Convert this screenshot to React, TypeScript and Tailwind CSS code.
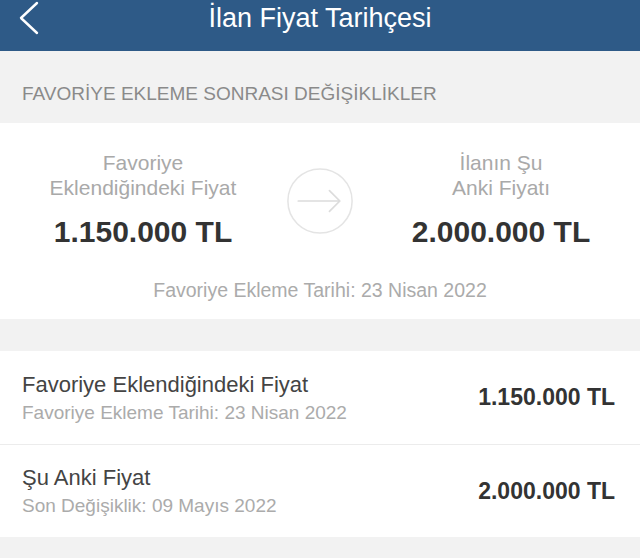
type PriceRow = {
  title: string;
  subtitle: string;
  price: string;
};

const rows: PriceRow[] = [
  {
    title: "Favoriye Eklendiğindeki Fiyat",
    subtitle: "Favoriye Ekleme Tarihi: 23 Nisan 2022",
    price: "1.150.000 TL",
  },
  {
    title: "Şu Anki Fiyat",
    subtitle: "Son Değişiklik: 09 Mayıs 2022",
    price: "2.000.000 TL",
  },
];

function ArrowCircle() {
  return (
    <svg width="72" height="72" viewBox="0 0 72 72" fill="none">
      <circle cx="36" cy="36" r="34" stroke="#e4e4e4" strokeWidth="1.6" />
      <path d="M13 36h44M46 25l11 11-11 11" stroke="#dcdcdc" strokeWidth="1.8" strokeLinecap="round" strokeLinejoin="round" />
    </svg>
  );
}

function BackChevron() {
  return (
    <svg width="22" height="34" viewBox="0 0 22 34" fill="none">
      <path d="M19 2 3 17l16 15" stroke="white" strokeWidth="2.4" strokeLinecap="round" strokeLinejoin="round" />
    </svg>
  );
}

export default function App() {
  return (
    <div className="min-h-[558px] w-[640px] bg-[#f2f2f2] font-['Liberation_Sans',Arial,sans-serif]">
      <header className="relative flex h-[51px] items-center justify-center bg-[#2e5a87]">
        <div className="absolute left-[18px] top-[1px]">
          <BackChevron />
        </div>
        <h1 className="-mt-[14px] text-[27px] text-white">İlan Fiyat Tarihçesi</h1>
      </header>

      <div className="flex h-[72px] items-center px-[22px] pt-[14px]">
        <p className="text-[19px] text-[#8a8a8a]">FAVORİYE EKLEME SONRASI DEĞİŞİKLİKLER</p>
      </div>

      <section className="bg-white pb-[18px] pt-[27px]">
        <div className="grid grid-cols-[286px_68px_1fr] items-start">
          <div className="flex flex-col items-center">
            <p className="text-center text-[21px] leading-[25px] text-[#a9a9a9]">
              Favoriye
              <br />
              Eklendiğindeki Fiyat
            </p>
            <p className="mt-[15px] text-[30px] font-bold leading-[34px] text-[#333]">1.150.000 TL</p>
          </div>
          <div className="flex justify-center pt-[15px]">
            <ArrowCircle />
          </div>
          <div className="flex flex-col items-center pl-[8px]">
            <p className="text-center text-[21px] leading-[25px] text-[#a9a9a9]">
              İlanın Şu
              <br />
              Anki Fiyatı
            </p>
            <p className="mt-[15px] text-[30px] font-bold leading-[34px] text-[#333]">2.000.000 TL</p>
          </div>
        </div>
        <p className="mt-[30px] text-center text-[19.5px] leading-[22px] text-[#ababab]">
          Favoriye Ekleme Tarihi: 23 Nisan 2022
        </p>
      </section>

      <div className="mt-[32px] bg-white">
        {rows.map((row, i) => (
          <div
            key={row.title}
            className={`flex items-center justify-between pl-[22px] pr-[25px] ${i > 0 ? "h-[93px] border-t border-[#ececec]" : "h-[93px]"}`}
          >
            <div className="flex flex-col">
              <span className="text-[22px] leading-[25px] text-[#444]">{row.title}</span>
              <span className="mt-[5px] text-[19px] leading-[22px] text-[#ababab]">{row.subtitle}</span>
            </div>
            <span className="text-[23px] font-bold text-[#333]">{row.price}</span>
          </div>
        ))}
      </div>
    </div>
  );
}
